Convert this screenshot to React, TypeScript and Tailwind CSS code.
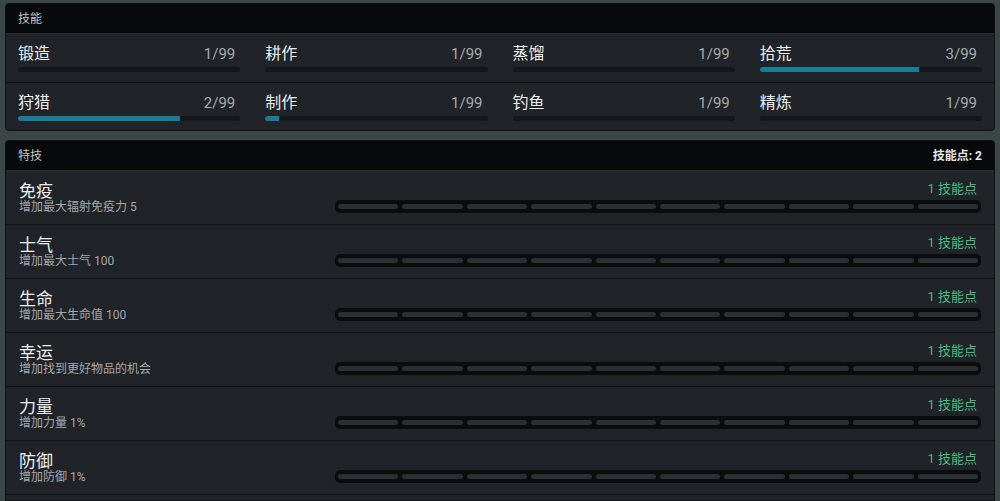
const SKILLS = [
  { name: "锻造", level: "1/99", pct: 0 },
  { name: "耕作", level: "1/99", pct: 0 },
  { name: "蒸馏", level: "1/99", pct: 0 },
  { name: "拾荒", level: "3/99", pct: 71.5 },
  { name: "狩猎", level: "2/99", pct: 73 },
  { name: "制作", level: "1/99", pct: 6 },
  { name: "钓鱼", level: "1/99", pct: 0 },
  { name: "精炼", level: "1/99", pct: 0 },
];

const PERKS = [
  { name: "免疫", desc: "增加最大辐射免疫力 5" },
  { name: "士气", desc: "增加最大士气 100" },
  { name: "生命", desc: "增加最大生命值 100" },
  { name: "幸运", desc: "增加找到更好物品的机会" },
  { name: "力量", desc: "增加力量 1%" },
  { name: "防御", desc: "增加防御 1%" },
];

const font = { fontFamily: 'Roboto, "Noto Sans CJK SC", sans-serif' };

function SkillCell({ name, level, pct }: { name: string; level: string; pct: number }) {
  return (
    <div className="flex flex-col">
      <div className="flex items-center justify-between leading-[20px]">
        <span className="text-[16px] text-[#eceef0]">{name}</span>
        <span className="pr-[5px] text-[15px] text-[#a7abae]">{level}</span>
      </div>
      <div className="mt-[3px] h-[5px] w-full overflow-hidden rounded-full bg-[#15181b]">
        <div className="h-full bg-[#177d99]" style={{ width: `${pct}%` }} />
      </div>
    </div>
  );
}

function PerkRow({ name, desc }: { name: string; desc: string }) {
  return (
    <div className="flex h-[54px] items-center justify-between border-b border-[#121416] pl-[13px] pr-[13px]">
      <div className="flex flex-col">
        <span className="text-[17px] leading-[18px] text-[#eceef0]">{name}</span>
        <span className="text-[12px] leading-[14px] text-[#a4a8ab]">{desc}</span>
      </div>
      <div className="flex flex-col items-end">
        <span className="mr-[4px] mb-[4px] text-[13px] leading-[14px] text-[#4cb981]">1 技能点</span>
        <div className="flex h-[13px] w-[646px] items-center gap-[4px] rounded-[5px] bg-[#0a0c0e] px-[3px]">
          {Array.from({ length: 10 }).map((_, i) => (
            <div key={i} className="h-[5px] flex-1 rounded-full bg-[#2b2f34]" />
          ))}
        </div>
      </div>
    </div>
  );
}

export default function App() {
  return (
    <div className="flex h-[501px] w-[1000px] flex-col overflow-hidden bg-[#3b4647] px-[5px] pt-[3px]" style={font}>
      <div className="overflow-hidden rounded-[4px] border border-[#101315] bg-[#202327]">
        <div className="flex h-[30px] items-center border-b border-[#2a2d31] bg-[#07090b] px-[12px] text-[12px] text-[#c3c6c8]">
          技能
        </div>
        <div className="grid grid-cols-4 gap-x-[25px] px-[12px]">
          {SKILLS.slice(0, 4).map((s) => (
            <div key={s.name} className="py-[10px]">
              <SkillCell {...s} />
            </div>
          ))}
        </div>
        <div className="border-t border-[#121416]" />
        <div className="grid grid-cols-4 gap-x-[25px] px-[12px]">
          {SKILLS.slice(4).map((s) => (
            <div key={s.name} className="pt-[10px] pb-[9px]">
              <SkillCell {...s} />
            </div>
          ))}
        </div>
      </div>

      <div className="mt-[9px] flex-1 overflow-hidden rounded-t-[4px] border border-[#101315] bg-[#202327]">
        <div className="flex h-[30px] items-center justify-between border-b border-[#2a2d31] bg-[#07090b] px-[12px] text-[12px]">
          <span className="text-[#c3c6c8]">特技</span>
          <span className="font-bold text-[#e6e8ea]">技能点: 2</span>
        </div>
        {PERKS.map((p) => (
          <PerkRow key={p.name} {...p} />
        ))}
      </div>
    </div>
  );
}
